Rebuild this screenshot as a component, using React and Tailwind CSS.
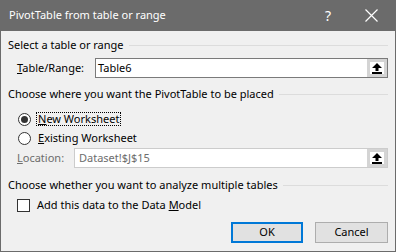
import React from "react";

const PickerButton = () => (
  <div className="w-[20px] h-full border-[3px] border-[#d4d4d4] bg-white flex items-center justify-center">
    <svg width="10" height="11" viewBox="0 0 10 11">
      <path d="M5 0 L10 5 L6.5 5 L6.5 8 L3.5 8 L3.5 5 L0 5 Z" fill="#000" />
      <rect x="0" y="9" width="10" height="2" fill="#000" />
    </svg>
  </div>
);

const SectionHeader = ({ children }) => (
  <div className="flex items-center gap-[5px] h-[14px]">
    <span className="whitespace-nowrap">{children}</span>
    <div className="flex-1 h-px bg-[#dcdcdc]" />
  </div>
);

const Radio = ({ checked }) => (
  <div className="w-[13px] h-[13px] shrink-0 rounded-full border border-[#333] bg-white flex items-center justify-center">
    {checked && <div className="w-[7px] h-[7px] rounded-full bg-[#333]" />}
  </div>
);

export default function App() {
  return (
    <div
      className="w-[396px] h-[252px] bg-[#f0f0f0] border-x border-b border-[#6b6b6b] text-[11px] text-[#000] flex flex-col overflow-hidden"
      style={{ fontFamily: '"Noto Sans", "Open Sans", sans-serif' }}
    >
      {/* title bar */}
      <div className="h-[31px] shrink-0 bg-[#6b6b6b] text-white flex items-center">
        <span className="pl-[8px] text-[11px] flex-1">PivotTable from table or range</span>
        <span className="text-[14px] w-[20px] text-center mr-[27px]">?</span>
        <svg width="13" height="13" viewBox="0 0 13 13" className="mr-[17px]">
          <path d="M0.5 0.5 L12.5 12.5 M12.5 0.5 L0.5 12.5" stroke="#fff" strokeWidth="1.2" />
        </svg>
      </div>

      <div className="pl-[7px] pr-[7px] pt-[7px] flex flex-col">
        <SectionHeader>Select a table or range</SectionHeader>

        <div className="flex items-center mt-[6px] h-[20px]">
          <span className="pl-[9px] w-[87px] shrink-0">
            <span className="underline">T</span>able/Range:
          </span>
          <div className="flex-1 h-full flex border border-[#7a7a7a] bg-white">
            <span className="flex-1 pl-[2px] leading-[18px]">Table6</span>
            <PickerButton />
          </div>
        </div>

        <div className="mt-[9px]">
          <SectionHeader>Choose where you want the PivotTable to be placed</SectionHeader>
        </div>

        <div className="flex items-center gap-[5px] pl-[10px] mt-[11px] h-[14px]">
          <Radio checked />
          <span className="border border-dotted border-[#000] leading-[12px] px-px">
            <span className="underline">N</span>ew Worksheet
          </span>
        </div>
        <div className="flex items-center gap-[5px] pl-[10px] mt-[5px] h-[14px]">
          <Radio />
          <span className="px-[2px]">
            <span className="underline">E</span>xisting Worksheet
          </span>
        </div>

        <div className="flex items-center mt-[3px] h-[20px]">
          <span className="pl-[9px] w-[66px] shrink-0 text-[#6d6d6d]">
            <span className="underline">L</span>ocation:
          </span>
          <div className="flex-1 h-full flex border border-[#cccccc] bg-white">
            <span className="flex-1 pl-[4px] leading-[18px] text-[#6d6d6d]">Dataset!$J$15</span>
            <PickerButton />
          </div>
        </div>

        <div className="mt-[10px]">
          <SectionHeader>Choose whether you want to analyze multiple tables</SectionHeader>
        </div>

        <div className="flex items-center gap-[7px] pl-[9px] mt-[6px] h-[14px]">
          <div className="w-[13px] h-[13px] border border-[#333] bg-white" />
          <span>
            Add this data to the Data <span className="underline">M</span>odel
          </span>
        </div>

        <div className="flex justify-end gap-[12px] mt-[10px]">
          <button className="w-[72px] h-[21px] border-2 border-[#0078d7] bg-[#e1e1e1] text-[11px]">OK</button>
          <button className="w-[73px] h-[21px] border border-[#adadad] bg-[#e1e1e1] text-[11px]">Cancel</button>
        </div>
      </div>
    </div>
  );
}
